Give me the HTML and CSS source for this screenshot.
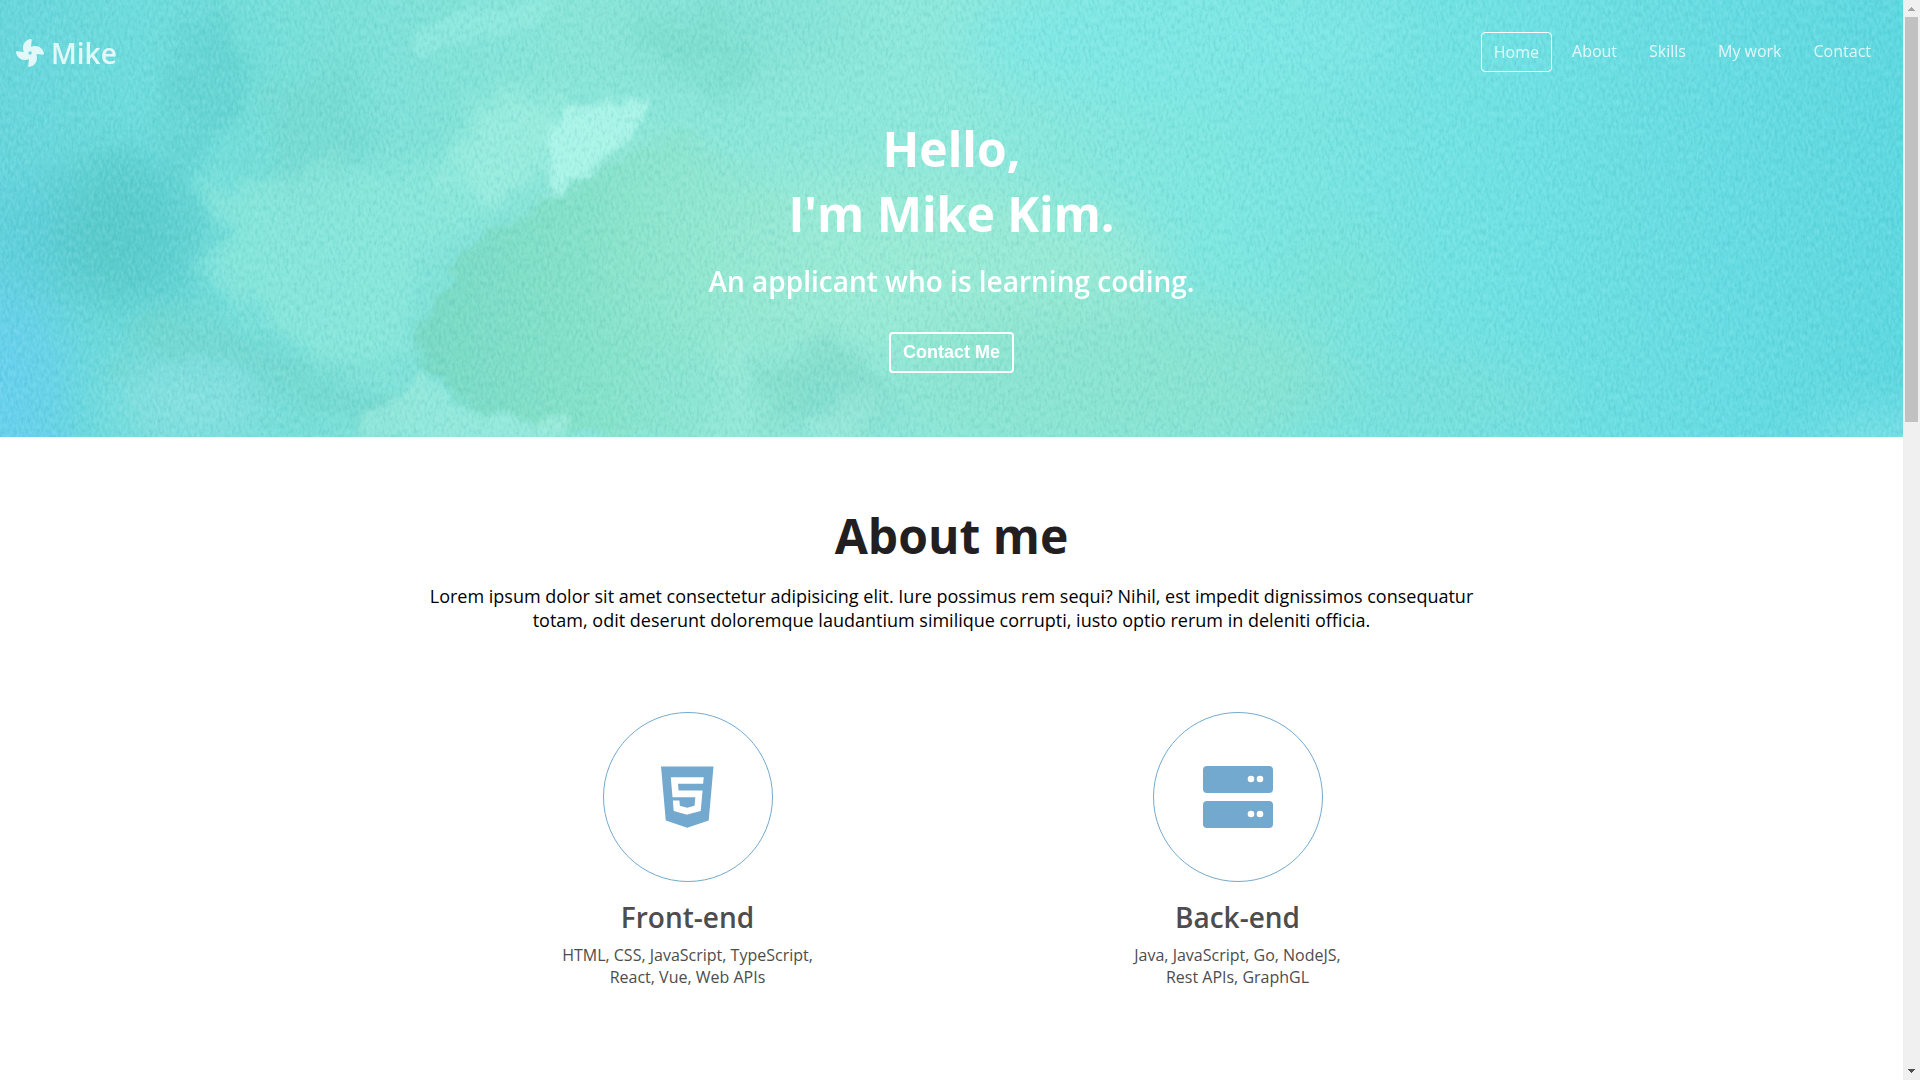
FILE: index.html
```html
<!DOCTYPE html>
<html lang="en">
<head>
<meta charset="utf-8">
<meta name="viewport" content="width=device-width, initial-scale=1">
<title>Mike Kim</title>
<link rel="stylesheet" href="styles.css">
</head>
<body>
<div class="page">
  <header class="hero" id="home">
    <svg class="hero-art" viewBox="0 0 1903 437" preserveAspectRatio="xMidYMid slice" aria-hidden="true">
      <defs>
        <linearGradient id="wash">
          <stop offset="0" stop-color="#69d7dd"/>
          <stop offset=".08" stop-color="#70dddd"/>
          <stop offset=".17" stop-color="#7be0d9"/>
          <stop offset=".3" stop-color="#8be6d9"/>
          <stop offset=".5" stop-color="#90e9dc"/>
          <stop offset=".64" stop-color="#80e7e1"/>
          <stop offset=".8" stop-color="#70e1e4"/>
          <stop offset="1" stop-color="#60d8e0"/>
        </linearGradient>
        <linearGradient id="leaf">
          <stop offset="0" stop-color="#79d9c4"/>
          <stop offset=".4" stop-color="#86e1c8" stop-opacity=".9"/>
          <stop offset="1" stop-color="#96e8d0" stop-opacity="0"/>
        </linearGradient>
        <filter id="soft" x="-60%" y="-60%" width="220%" height="220%" color-interpolation-filters="sRGB"><feGaussianBlur stdDeviation="26"/></filter>
        <filter id="mid" x="-40%" y="-40%" width="180%" height="180%" color-interpolation-filters="sRGB">
          <feGaussianBlur stdDeviation="13" result="b"/>
          <feTurbulence type="fractalNoise" baseFrequency=".02" numOctaves="4" seed="4"/>
          <feDisplacementMap in="b" scale="60" xChannelSelector="R" yChannelSelector="G"/>
        </filter>
        <filter id="edge" x="-20%" y="-20%" width="140%" height="140%" color-interpolation-filters="sRGB">
          <feGaussianBlur stdDeviation="3" result="b"/>
          <feTurbulence type="fractalNoise" baseFrequency=".04" numOctaves="4" seed="9"/>
          <feDisplacementMap in="b" scale="24" xChannelSelector="R" yChannelSelector="G"/>
        </filter>
        <filter id="paper" x="0" y="0" width="100%" height="100%" color-interpolation-filters="sRGB">
          <feTurbulence type="fractalNoise" baseFrequency=".36 .17" numOctaves="3" seed="7" result="n"/>
          <feColorMatrix in="n" values="0 0 0 0 0  0 0 0 0 .5  0 0 0 0 .53  .8 0 0 0 -.39" result="dark"/>
          <feColorMatrix in="n" values="0 0 0 0 .8  0 0 0 0 1  0 0 0 0 1  -1 0 0 0 .5" result="light"/>
          <feMerge><feMergeNode in="dark"/><feMergeNode in="light"/></feMerge>
        </filter>
      </defs>
      <rect width="1903" height="437" fill="url(#wash)"/>
      <g filter="url(#soft)">
        <ellipse cx="0" cy="390" rx="65" ry="110" fill="#69d1ec"/>
        <ellipse cx="25" cy="240" rx="55" ry="60" fill="#60cedb" opacity=".8"/>
        <ellipse cx="115" cy="235" rx="65" ry="75" fill="#5ac9cb" opacity=".8"/>
        <ellipse cx="190" cy="400" rx="80" ry="50" fill="#86e0df"/>
        <ellipse cx="860" cy="270" rx="300" ry="90" fill="#9debd4" opacity=".8"/>
        <ellipse cx="640" cy="220" rx="90" ry="80" fill="#9aead4" opacity=".7"/>
        <ellipse cx="1120" cy="380" rx="230" ry="80" fill="#8ee3ce" opacity=".75"/>
        <ellipse cx="1340" cy="280" rx="60" ry="40" fill="#7fe2d4" opacity=".6"/>
        <ellipse cx="1180" cy="40" rx="220" ry="60" fill="#7fe7e6" opacity=".8"/>
        <ellipse cx="740" cy="20" rx="120" ry="40" fill="#83dfd5" opacity=".7"/>
        <ellipse cx="1430" cy="400" rx="140" ry="50" fill="#7ddfd8" opacity=".6"/>
        <ellipse cx="1890" cy="440" rx="80" ry="20" fill="#84e5ea"/>
      </g>
      <g filter="url(#mid)">
        <path d="M200 0L230 30 250 80 220 130 205 165 165 150 175 90Z" fill="#60d1cf" opacity=".6"/>
        <path d="M80 170L180 150 195 200 210 280 160 300 100 280Z" fill="#5acaca" opacity=".4"/>
        <path d="M110 350L170 300 230 325 290 370 350 385 410 395 390 430 300 400 200 360Z" fill="#73d3ca" opacity=".6"/>
        <path d="M270 80L350 70 370 150 330 220 260 190Z" fill="#76d8cd" opacity=".5"/>
        <path d="M210 180L420 160 530 190 430 250 400 370 330 370 220 280Z" fill="#91e9db" opacity=".65"/>
        <path d="M480 100L560 90 560 180 500 210 440 170Z" fill="#a1f0df" opacity=".7"/>
        <path d="M640 20L700 10 770 60 740 90 650 60Z" fill="#79dac9" opacity=".55"/>
        <path d="M750 370L830 340 880 370 900 437 770 437Z" fill="#7cd6c4" opacity=".5"/>
        <path d="M705 350L760 330 750 400 800 437 710 437Z" fill="#a3eee0" opacity=".6"/>
        <path d="M830 410L880 390 850 437 810 437Z" fill="#a6efe1" opacity=".8"/>
      </g>
      <g filter="url(#edge)">
        <path d="M556 195L498 230 468 250 440 292 419 325 424 365 460 402 510 418 560 432 640 437 800 437 840 300 800 200 680 130 620 160Z" fill="url(#leaf)"/>
        <path d="M420 368L455 405 500 412 560 430 560 445 430 445 350 430 400 395Z" fill="#9debdd" opacity=".65"/>
        <path d="M412 35L430 22 465 5 560 0 520 35 445 45 425 62 408 50Z" fill="#99eee3" opacity=".5"/>
        <path d="M555 108L595 103 650 98 645 112 612 155 580 178 553 190 547 150Z" fill="#b3f8ec" opacity=".8"/>
        <path d="M535 415L570 410 562 437 540 432Z" fill="#a0ecdc" opacity=".8"/>
      </g>
      <rect width="1903" height="437" filter="url(#paper)" opacity=".42"/>
    </svg>
    <nav class="navbar">
      <a class="logo" href="#home">
        <svg class="logo-mark" viewBox="0 0 512 512" aria-hidden="true"><path d="M352.57 128c-28.09 0-54.09 4.52-77.06 12.86l12.41-123.11C289 7.31 279.81-1.18 269.33.13 189.63 10.13 128 77.64 128 159.43c0 28.09 4.52 54.09 12.86 77.06L17.75 224.08C7.31 223-1.18 232.19.13 242.67c10 79.7 77.51 141.33 159.3 141.33 28.09 0 54.09-4.52 77.06-12.86l-12.41 123.11c-1.05 10.43 8.11 18.93 18.59 17.62 79.7-10 141.33-77.51 141.33-159.3 0-28.09-4.52-54.09-12.86-77.06l123.11 12.41c10.44 1.05 18.93-8.11 17.62-18.59-10-79.7-77.51-141.33-159.3-141.33zM256 288a32 32 0 1 1 32-32 32 32 0 0 1-32 32z"/></svg>
        <span>Mike</span>
      </a>
      <ul class="menu">
        <li><a class="menu-link active" href="#home">Home</a></li>
        <li><a class="menu-link" href="#about">About</a></li>
        <li><a class="menu-link" href="#skills">Skills</a></li>
        <li><a class="menu-link" href="#work">My work</a></li>
        <li><a class="menu-link" href="#contact">Contact</a></li>
      </ul>
    </nav>
    <div class="intro">
      <h1 class="title">Hello,<br>I'm Mike Kim.</h1>
      <p class="tagline">An applicant who is learning coding.</p>
      <button class="contact-button" type="button">Contact Me</button>
    </div>
  </header>
  <main class="about" id="about">
    <h2 class="section-title">About me</h2>
    <p class="lead">Lorem ipsum dolor sit amet consectetur adipisicing elit. Iure possimus rem sequi? Nihil, est impedit dignissimos consequatur totam, odit deserunt doloremque laudantium similique corrupti, iusto optio rerum in deleniti officia.</p>
    <div class="majors">
      <section class="major">
        <div class="badge">
          <svg class="badge-icon" viewBox="0 0 384 512" aria-hidden="true"><path d="M0 32l34.9 395.8L191.5 480l157.6-52.2L384 32H0zm308.2 127.9H124.4l4.1 49.4h175.6l-13.6 148.4-97.9 27v.3h-1.1l-98.7-27.3-6-75.8h47.7L138 320l53.5 14.5 53.7-14.5 6-62.2H84.3L71.5 112.2h241.1l-4.4 47.7z"/></svg>
        </div>
        <h3 class="major-title">Front-end</h3>
        <p class="major-text">HTML, CSS, JavaScript, TypeScript,<br>React, Vue, Web APIs</p>
      </section>
      <section class="major">
        <div class="badge">
          <svg class="badge-icon" viewBox="0 0 70 70" aria-hidden="true">
            <rect y="4" width="70" height="27" rx="4"/><rect y="39" width="70" height="27" rx="4"/>
            <g fill="#fff"><circle cx="48" cy="17" r="3.3"/><circle cx="57" cy="17" r="3.3"/><circle cx="48" cy="52" r="3.3"/><circle cx="57" cy="52" r="3.3"/></g>
          </svg>
        </div>
        <h3 class="major-title">Back-end</h3>
        <p class="major-text">Java, JavaScript, Go, NodeJS,<br>Rest APIs, GraphGL</p>
      </section>
    </div>
  </main>
</div>
<div class="scrollbar" aria-hidden="true">
  <svg class="arrow" viewBox="0 0 17 17" shape-rendering="crispEdges"><path d="M8 7h1v1h1v1h1v1h1v1H5v-1h1V9h1V8h1z" fill="#a3a3a3"/></svg>
  <div class="track"><div class="thumb"></div></div>
  <svg class="arrow" viewBox="0 0 17 17" shape-rendering="crispEdges"><path d="M5 6h7v1h-1v1h-1v1H9v1H8V9H7V8H6V7H5z" fill="#505050"/></svg>
</div>
</body>
</html>
```
FILE: styles.css
```css
* { box-sizing: border-box; }

body {
  margin: 0;
  display: flex;
  align-items: flex-start;
  background: #fff;
  color: #000;
  font-family: "Open Sans", "Noto Sans", sans-serif;
  font-size: 16px;
  line-height: 22px;
}

h1, h2, h3, p, ul { margin: 0; padding: 0; }
a { color: inherit; text-decoration: none; }

.page { flex: 1; min-width: 0; }

.hero {
  position: relative;
  isolation: isolate;
  overflow: hidden;
  padding-bottom: 64px;
  background: #7fe3dc;
  color: #fff;
}

.hero-art {
  position: absolute;
  inset: 0;
  z-index: -1;
  width: 100%;
  height: 100%;
}

.navbar {
  display: flex;
  justify-content: space-between;
  align-items: center;
  height: 104px;
  padding: 0 16px;
  color: rgba(255, 255, 255, .8);
}

.logo {
  display: flex;
  align-items: center;
  gap: 7px;
  padding-top: 2px;
  font-size: 28px;
  font-weight: 600;
  line-height: 38px;
}

.logo-mark { width: 28px; height: 28px; fill: currentColor; }

.menu { display: flex; gap: 8px; padding: 0 4px; list-style: none; }

.menu-link { display: block; padding: 8px 12px; }

.menu-link.active {
  border: 1px solid #fff;
  border-radius: 4px;
}

.intro {
  display: flex;
  flex-direction: column;
  align-items: center;
  padding-top: 12px;
  text-align: center;
}

.title, .section-title { font-size: 48px; font-weight: 700; line-height: 65px; }

.tagline, .major-title { font-size: 28px; font-weight: 600; line-height: 38px; }

.tagline { margin: 16px 0 32px; }

.contact-button {
  padding: 10px 12px;
  border: 2px solid #fff;
  border-radius: 4px;
  background: transparent;
  color: inherit;
  font: 700 18px/17px "Liberation Sans", Arial, sans-serif;
}

.about {
  max-width: 1200px;
  margin: 0 auto;
  padding: 66px 50px 96px;
  text-align: center;
}

.section-title { color: #231f20; }

.lead {
  max-width: 1080px;
  margin: 16px auto 80px;
  font-size: 18px;
  line-height: 24px;
}

.majors {
  display: grid;
  grid-template-columns: 1fr 1fr;
  margin: 0 -11px 0 11px;
}

.major { display: flex; flex-direction: column; align-items: center; color: #4d4d4d; }

.badge {
  display: grid;
  place-items: center;
  width: 170px;
  height: 170px;
  margin-bottom: 16px;
  border: 1px solid #73a9ce;
  border-radius: 50%;
}

.badge-icon { height: 70px; fill: #73a9ce; }

.major-text { margin-top: 8px; }

.scrollbar {
  position: sticky;
  top: 0;
  display: flex;
  flex-direction: column;
  width: 17px;
  height: 100vh;
  background: #f0f0f0;
}

.arrow { width: 17px; height: 17px; }

.track { flex: 1; padding: 0 2px; }

.thumb { height: 38.7%; background: #c1c1c1; }
```
